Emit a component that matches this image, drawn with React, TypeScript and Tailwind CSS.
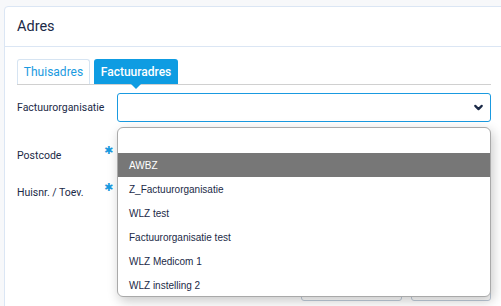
import { ChevronDown } from 'lucide-react';

const options = [
  '',
  'AWBZ',
  'Z_Factuurorganisatie',
  'WLZ test',
  'Factuurorganisatie test',
  'WLZ Medicom 1',
  'WLZ instelling 2',
];

const Asterisk = () => (
  <span className="absolute left-[87px] top-[-3px] text-[11px] leading-none text-[#1a9ae0] font-['DejaVu_Sans',sans-serif]">✱</span>
);

export default function App() {
  return (
    <div className="w-[501px] h-[306px] overflow-hidden bg-[#f7f8fa] pt-[6px] pl-[4px] font-['Roboto',sans-serif]">
      <div className="w-[499px] h-[320px] bg-white border border-[#dbe6f4] rounded-tl-[4px]">
        {/* Header */}
        <div className="h-[40px] border-b border-[#dbe6f4] px-[12px] flex items-center">
          <h2 className="text-[14.5px] text-[#1b2a47]">Adres</h2>
        </div>

        <div className="pl-[12px] pr-[11px] pt-[12px]">
          {/* Tabs */}
          <div className="flex gap-[4px] border-b border-[#d0d0d0] h-[26px]">
            <div className="w-[73px] h-[25px] border border-b-0 border-[#d6e4f2] rounded-t-[3px] flex items-center justify-center text-[12px] text-[#1a9ae0]">
              Thuisadres
            </div>
            <div className="relative w-[84px] h-[25px] bg-[#0e9ce2] rounded-t-[3px] flex items-center justify-center text-[12px] text-white font-medium">
              Factuuradres
              <span className="absolute left-1/2 -translate-x-1/2 top-[25px] w-0 h-0 border-l-[5px] border-r-[5px] border-t-[5px] border-l-transparent border-r-transparent border-t-[#0e9ce2]" />
            </div>
          </div>

          {/* Form */}
          <div className="mt-[8px] flex flex-col gap-[8px] text-[10.5px] text-[#1b2a47]">
            <div className="flex items-center h-[29px]">
              <label className="w-[100px]">Factuurorganisatie</label>
              <div className="relative flex-1">
                <div className="h-[29px] border border-[#1a9ae0] rounded-[3px] flex items-center justify-end pr-[5px]">
                  <ChevronDown className="w-[13px] h-[13px] text-[#1b2a47]" strokeWidth={4} />
                </div>
                {/* open dropdown list */}
                <div className="absolute z-10 left-0 right-0 top-[34px] h-[170px] bg-white border border-[#a9a9a9] rounded-[6px] shadow-[2px_4px_12px_rgba(0,0,0,0.22)] overflow-hidden font-['Liberation_Sans',Arial,sans-serif] text-[10px] text-[#1b2a47]">
                  {options.map((o, i) => (
                    <div
                      key={i}
                      className={`flex items-center pl-[11px] ${i === 0 ? 'h-[25px]' : 'h-[24px]'} ${o === 'AWBZ' ? 'bg-[#777777] text-white' : ''}`}
                    >
                      {o}
                    </div>
                  ))}
                </div>
              </div>
            </div>

            <div className="flex items-center h-[29px] mt-[11px]">
              <label className="relative w-[100px]">
                Postcode
                <Asterisk />
              </label>
              <div className="flex-1 h-[29px] border border-[#c9d4e0] rounded-[3px]" />
            </div>

            <div className="flex items-center h-[29px]">
              <label className="relative w-[100px]">
                Huisnr. / Toev.
                <Asterisk />
              </label>
              <div className="flex-1 h-[29px] border border-[#c9d4e0] rounded-[3px]" />
            </div>

            <div className="flex justify-end gap-[9px] mt-[57px]">
              <div className="w-[101px] h-[29px] border border-[#bfcbd9] rounded-[3px]" />
              <div className="w-[80px] h-[29px] border border-[#bfcbd9] rounded-[3px]" />
            </div>
          </div>
        </div>
      </div>
    </div>
  );
}
